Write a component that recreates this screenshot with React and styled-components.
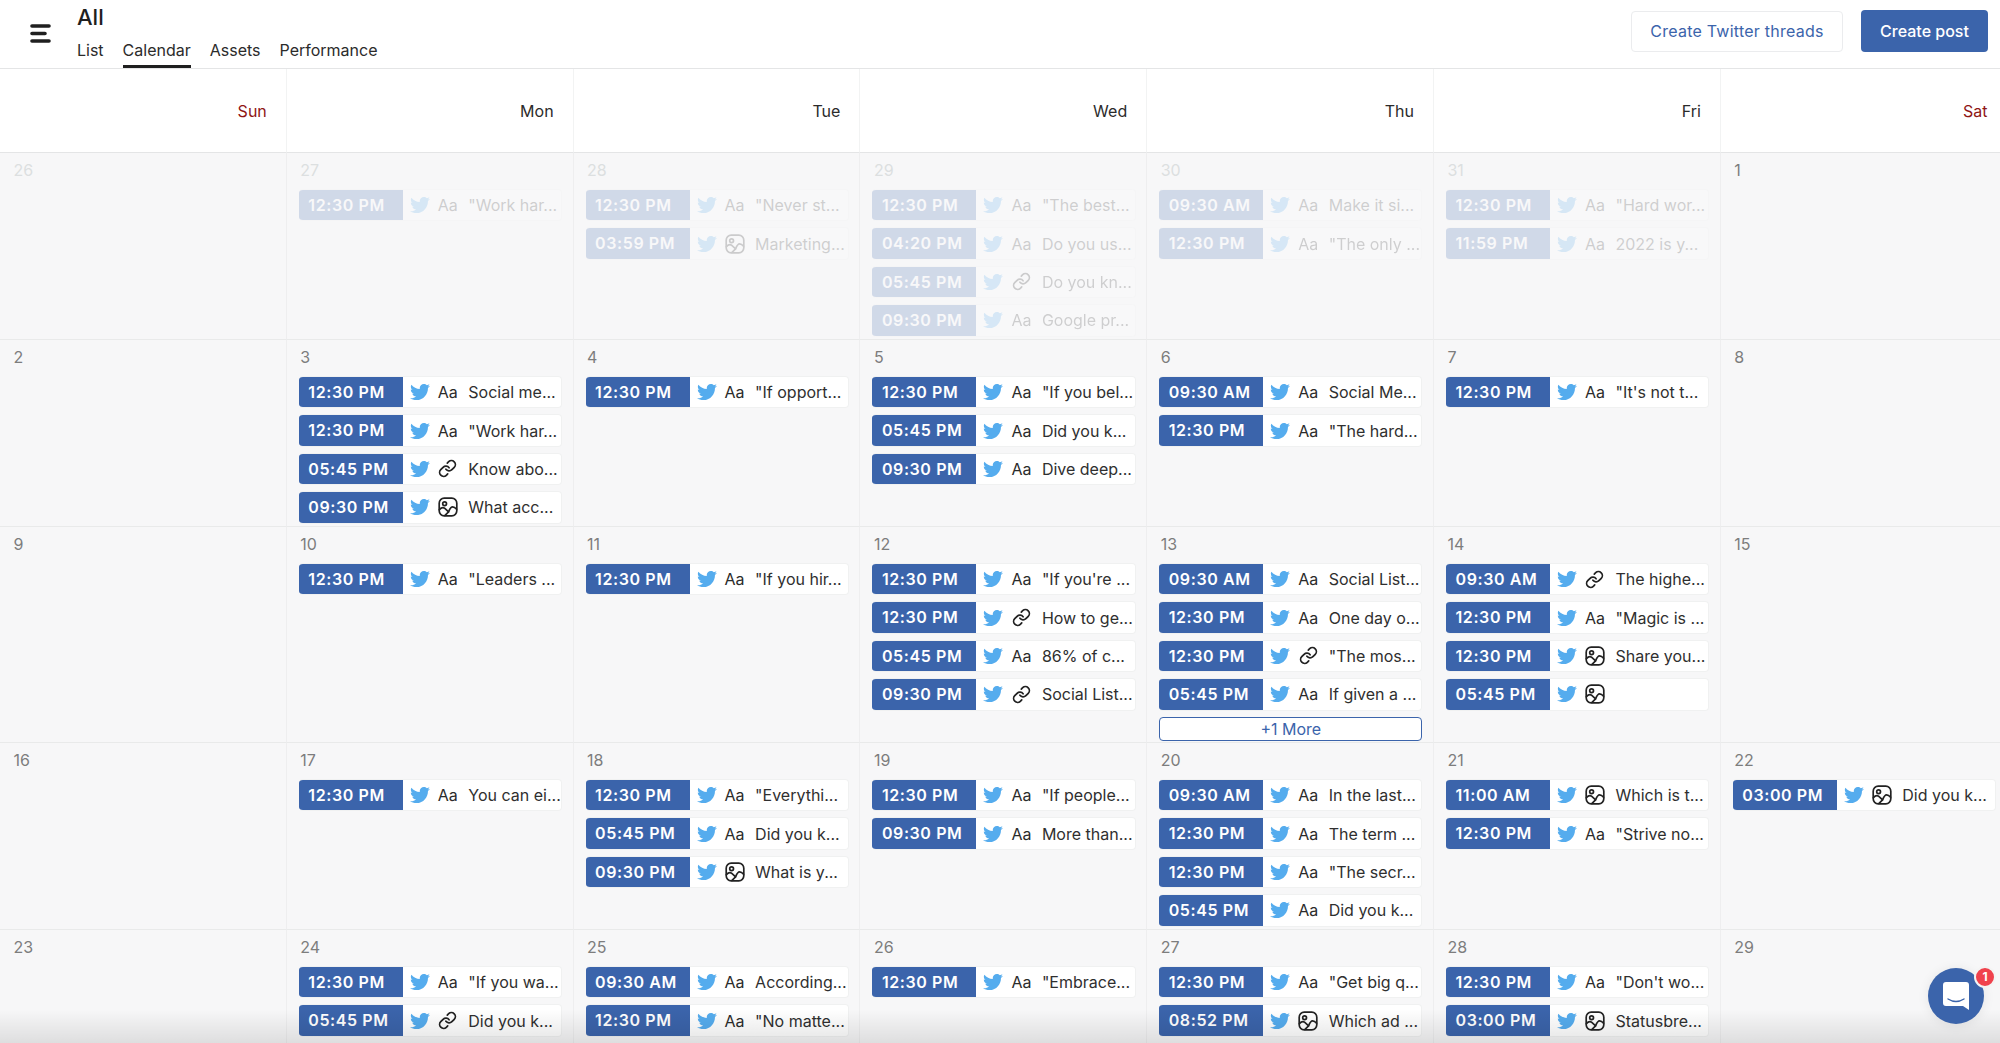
import React from 'react';
import styled, { createGlobalStyle } from 'styled-components';
import { FaTwitter } from 'react-icons/fa';
import { Link } from 'lucide-react';

const GlobalStyle = createGlobalStyle`
  html, body {
    margin: 0;
    height: 100%;
    overflow: hidden;
    background: #fff;
    font-family: Inter, "Noto Sans", sans-serif;
    color: #222;
  }
  * { box-sizing: border-box; }
`;

const Page = styled.div`
  position: relative;
  height: 100vh;
  overflow: hidden;
`;

const Header = styled.header`
  height: 69px;
  display: flex;
  align-items: flex-start;
  border-bottom: 1px solid #e4e5e6;
  padding-left: 30px;
`;

const MenuButton = styled.div`
  width: 21px;
  margin-top: 24px;
  margin-right: 26px;
  line-height: 0;
`;

const TitleBlock = styled.div`
  flex: 1;
`;

const Title = styled.h1`
  margin: 0;
  padding-top: 4px;
  height: 38px;
  font-size: 22px;
  line-height: 26px;
  font-weight: 500;
  color: #1f1f1f;
`;

const Tabs = styled.nav`
  display: flex;
  gap: 19px;
`;

const Tab = styled.div`
  height: 30px;
  font-size: 16px;
  line-height: 24px;
  color: #2b2b2b;
  border-bottom: ${(p) => (p.$active ? '3px solid #1f1f1f' : '3px solid transparent')};
`;

const Actions = styled.div`
  display: flex;
  align-items: center;
  gap: 18px;
  padding: 10px 12px 0 0;
`;

const OutlineButton = styled.button`
  height: 41px;
  width: 212px;
  background: #fff;
  border: 1px solid #ebecee;
  border-radius: 4px;
  color: #3b64ab;
  font: 400 16px Inter, sans-serif;
  letter-spacing: 0.25px;
`;

const PrimaryButton = styled.button`
  height: 42px;
  width: 127px;
  background: #3b64ab;
  border: none;
  border-radius: 4px;
  color: #fff;
  font: 500 16px Inter, sans-serif;
`;

// seven columns run slightly past the window's right edge, as in the app
const Grid = styled.div`
  display: grid;
  grid-template-columns: repeat(7, 286.8px);
`;

const Weekday = styled.div`
  height: 84px;
  padding-right: 19px;
  display: flex;
  align-items: center;
  justify-content: flex-end;
  font-size: 16px;
  color: ${(p) => (p.$weekend ? '#8f1515' : '#2b2b2b')};
  border-right: 1px solid #f2f3f3;
  border-bottom: 1px solid #e4e5e6;
`;

const Cell = styled.div`
  height: ${(p) => p.$height}px;
  padding: 5px 10.5px 0 12px;
  background: #f7f7f8;
  border-right: 1px solid #eeeeef;
  border-bottom: 1px solid #e9eaea;
`;

const DateNumber = styled.div`
  height: 24px;
  padding-left: 1.5px;
  margin-bottom: 7px;
  font-size: 16px;
  line-height: 24px;
  color: ${(p) => (p.$faded ? '#dcdfe0' : '#7d7d7d')};
`;

const EventList = styled.div`
  display: flex;
  flex-direction: column;
  gap: 6px;
  opacity: ${(p) => (p.$faded ? 0.2 : 1)};
`;

const EventRow = styled.div`
  height: 32.4px;
  display: flex;
  align-items: center;
  background: #fff;
  border: 1px solid #f0f1f1;
  border-left: none;
  border-radius: 4px;
  overflow: hidden;
`;

const TimeBadge = styled.div`
  flex: none;
  width: 104px;
  height: 32.4px;
  padding-left: 9.5px;
  background: #3b64ab;
  color: #fff;
  font-size: 16px;
  font-weight: 600;
  letter-spacing: 0.6px;
  line-height: 32px;
`;

const NetworkIcon = styled(FaTwitter)`
  flex: none;
  width: 20px;
  height: 20px;
  margin-left: 7px;
  color: #55acee;
`;

const KindSlot = styled.div`
  flex: none;
  width: 20px;
  margin-left: 8px;
  margin-right: 10.5px;
  display: flex;
  justify-content: center;
  font-size: 16px;
  color: #2b2b2b;
`;

const EventText = styled.div`
  font-size: 16px;
  white-space: nowrap;
  color: #2f2f2f;
`;

const MoreButton = styled.div`
  height: 24px;
  margin-top: 0.4px;
  text-align: center;
  line-height: 22px;
  font-size: 16px;
  color: #3b64ab;
  background: #fff;
  border: 1px solid #3b64ab;
  border-radius: 4px;
`;

const BottomFade = styled.div`
  position: absolute;
  left: 0;
  right: 0;
  bottom: 0;
  height: 34px;
  pointer-events: none;
  background: linear-gradient(to bottom, rgba(0, 0, 0, 0), rgba(0, 0, 0, 0.1));
`;

const ChatBubble = styled.div`
  position: absolute;
  left: 1928px;
  top: 968px;
  width: 56px;
  height: 56px;
  border-radius: 50%;
  background: #3b64ab;
  display: flex;
  align-items: center;
  justify-content: center;
  box-shadow: 0 1px 12px rgba(0, 0, 0, 0.08);
`;

const ChatBadge = styled.div`
  position: absolute;
  top: -2px;
  right: -12px;
  width: 22px;
  height: 22px;
  border-radius: 50%;
  background: #f0424d;
  border: 2px solid #f4f4f4;
  color: #fff;
  font-size: 12px;
  font-weight: 700;
  line-height: 18px;
  text-align: center;
`;

const MenuIcon = () => (
  <svg width="21" height="19" viewBox="0 0 21 19" fill="none" stroke="#1f1f1f" strokeWidth="3.6" strokeLinecap="round">
    <path d="M2 2h17M2 9.5h13M2 17h17" />
  </svg>
);

const ImageIcon = () => (
  <svg width="20" height="20" viewBox="0 0 20 20" fill="none" stroke="#222" strokeWidth="1.7" strokeLinecap="round" strokeLinejoin="round">
    <rect x="1.2" y="1.2" width="17.6" height="17.6" rx="5" />
    <circle cx="6.6" cy="6.8" r="1.9" />
    <path d="M1.4 12.6c2-2.2 3.7-2.6 5.4-1.2l3.8 3.4c1-2.6 2.6-5 4-5 1.4 0 2.8 1 4 2.4" />
    <path d="M7 18.4l3.6-3.6" />
  </svg>
);

const ChatIcon = () => (
  <svg width="26" height="28" viewBox="0 0 26 28">
    <path d="M3 0h20a3 3 0 0 1 3 3v25l-6-4H3a3 3 0 0 1-3-3V3a3 3 0 0 1 3-3z" fill="#fff" />
    <path d="M5 17c5 3.2 11 3.2 16 0" fill="none" stroke="#3b64ab" strokeWidth="1.4" strokeLinecap="round" />
  </svg>
);

const KIND_TEXT = 't';
const KIND_LINK = 'l';
const KIND_IMAGE = 'i';

const WEEKDAYS = ['Sun', 'Mon', 'Tue', 'Wed', 'Thu', 'Fri', 'Sat'];

// [time, kind, text]
const WEEKS = [
  {
    height: 187,
    days: [
      { date: 26, faded: true, events: [] },
      { date: 27, faded: true, events: [['12:30 PM', 't', '"Work har...']] },
      { date: 28, faded: true, events: [['12:30 PM', 't', '"Never st...'], ['03:59 PM', 'i', 'Marketing...']] },
      { date: 29, faded: true, events: [['12:30 PM', 't', '"The best...'], ['04:20 PM', 't', 'Do you us...'], ['05:45 PM', 'l', 'Do you kn...'], ['09:30 PM', 't', 'Google pr...']] },
      { date: 30, faded: true, events: [['09:30 AM', 't', 'Make it si...'], ['12:30 PM', 't', '"The only ...']] },
      { date: 31, faded: true, events: [['12:30 PM', 't', '"Hard wor...'], ['11:59 PM', 't', '2022 is y...']] },
      { date: 1, events: [] },
    ],
  },
  {
    height: 187,
    days: [
      { date: 2, events: [] },
      { date: 3, events: [['12:30 PM', 't', 'Social me...'], ['12:30 PM', 't', '"Work har...'], ['05:45 PM', 'l', 'Know abo...'], ['09:30 PM', 'i', 'What acc...']] },
      { date: 4, events: [['12:30 PM', 't', '"If opport...']] },
      { date: 5, events: [['12:30 PM', 't', '"If you bel...'], ['05:45 PM', 't', 'Did you k...'], ['09:30 PM', 't', 'Dive deep...']] },
      { date: 6, events: [['09:30 AM', 't', 'Social Me...'], ['12:30 PM', 't', '"The hard...']] },
      { date: 7, events: [['12:30 PM', 't', '"It\'s not t...']] },
      { date: 8, events: [] },
    ],
  },
  {
    height: 216,
    days: [
      { date: 9, events: [] },
      { date: 10, events: [['12:30 PM', 't', '"Leaders ...']] },
      { date: 11, events: [['12:30 PM', 't', '"If you hir...']] },
      { date: 12, events: [['12:30 PM', 't', '"If you\'re ...'], ['12:30 PM', 'l', 'How to ge...'], ['05:45 PM', 't', '86% of c...'], ['09:30 PM', 'l', 'Social List...']] },
      { date: 13, more: '+1 More', events: [['09:30 AM', 't', 'Social List...'], ['12:30 PM', 't', 'One day o...'], ['12:30 PM', 'l', '"The mos...'], ['05:45 PM', 't', 'If given a ...']] },
      { date: 14, events: [['09:30 AM', 'l', 'The highe...'], ['12:30 PM', 't', '"Magic is ...'], ['12:30 PM', 'i', 'Share you...'], ['05:45 PM', 'i', '']] },
      { date: 15, events: [] },
    ],
  },
  {
    height: 187,
    days: [
      { date: 16, events: [] },
      { date: 17, events: [['12:30 PM', 't', 'You can ei...']] },
      { date: 18, events: [['12:30 PM', 't', '"Everythi...'], ['05:45 PM', 't', 'Did you k...'], ['09:30 PM', 'i', 'What is y...']] },
      { date: 19, events: [['12:30 PM', 't', '"If people...'], ['09:30 PM', 't', 'More than...']] },
      { date: 20, events: [['09:30 AM', 't', 'In the last...'], ['12:30 PM', 't', 'The term ...'], ['12:30 PM', 't', '"The secr...'], ['05:45 PM', 't', 'Did you k...']] },
      { date: 21, events: [['11:00 AM', 'i', 'Which is t...'], ['12:30 PM', 't', '"Strive no...']] },
      { date: 22, events: [['03:00 PM', 'i', 'Did you k...']] },
    ],
  },
  {
    height: 187,
    days: [
      { date: 23, events: [] },
      { date: 24, events: [['12:30 PM', 't', '"If you wa...'], ['05:45 PM', 'l', 'Did you k...'], ['09:30 PM', 't', '']] },
      { date: 25, events: [['09:30 AM', 't', 'According...'], ['12:30 PM', 't', '"No matte...'], ['05:45 PM', 't', '']] },
      { date: 26, events: [['12:30 PM', 't', '"Embrace...']] },
      { date: 27, events: [['12:30 PM', 't', '"Get big q...'], ['08:52 PM', 'i', 'Which ad ...'], ['09:30 PM', 't', '']] },
      { date: 28, events: [['12:30 PM', 't', '"Don\'t wo...'], ['03:00 PM', 'i', 'Statusbre...']] },
      { date: 29, events: [] },
    ],
  },
];

const KindIcon = ({ kind }) => {
  if (kind === KIND_LINK) return <Link size={19} strokeWidth={2.2} color="#222" />;
  if (kind === KIND_IMAGE) return <ImageIcon />;
  if (kind === KIND_TEXT) return <span>Aa</span>;
  return null;
};

const CalendarEvent = ({ time, kind, text }) => (
  <EventRow>
    <TimeBadge>{time}</TimeBadge>
    <NetworkIcon />
    <KindSlot>
      <KindIcon kind={kind} />
    </KindSlot>
    <EventText>{text}</EventText>
  </EventRow>
);

export default function App() {
  return (
    <Page>
      <GlobalStyle />
      <Header>
        <MenuButton>
          <MenuIcon />
        </MenuButton>
        <TitleBlock>
          <Title>All</Title>
          <Tabs>
            <Tab>List</Tab>
            <Tab $active>Calendar</Tab>
            <Tab>Assets</Tab>
            <Tab>Performance</Tab>
          </Tabs>
        </TitleBlock>
        <Actions>
          <OutlineButton>Create Twitter threads</OutlineButton>
          <PrimaryButton>Create post</PrimaryButton>
        </Actions>
      </Header>
      <Grid>
        {WEEKDAYS.map((day) => (
          <Weekday key={day} $weekend={day === 'Sun' || day === 'Sat'}>
            {day}
          </Weekday>
        ))}
      </Grid>
      <Grid>
        {WEEKS.flatMap((week, w) =>
          week.days.map((day) => (
            <Cell key={`${w}-${day.date}`} $height={week.height}>
              <DateNumber $faded={day.faded}>{day.date}</DateNumber>
              <EventList $faded={day.faded}>
                {day.events.map(([time, kind, text], i) => (
                  <CalendarEvent key={i} time={time} kind={kind} text={text} />
                ))}
                {day.more && <MoreButton>{day.more}</MoreButton>}
              </EventList>
            </Cell>
          ))
        )}
      </Grid>
      <BottomFade />
      <ChatBubble>
        <ChatIcon />
        <ChatBadge>1</ChatBadge>
      </ChatBubble>
    </Page>
  );
}
